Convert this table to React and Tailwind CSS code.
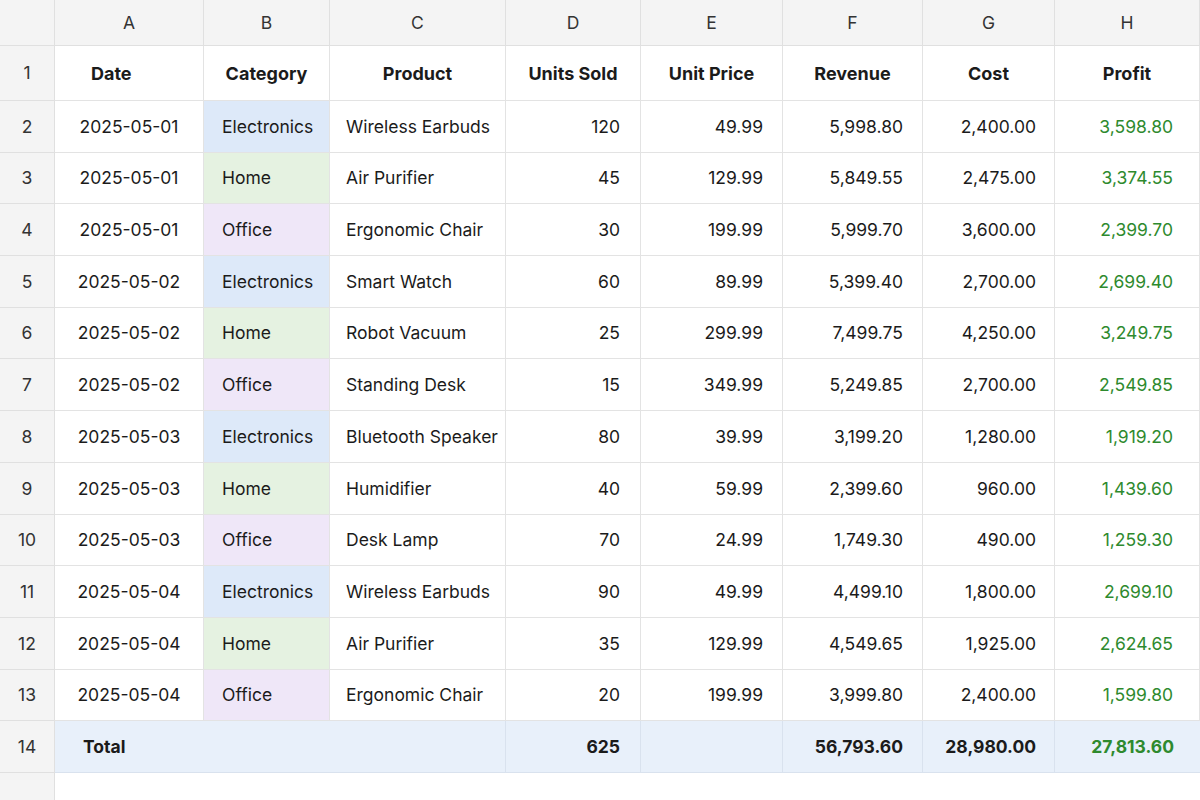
import React from "react";

const rows = [
  ["2025-05-01", "Electronics", "Wireless Earbuds", "120", "49.99", "5,998.80", "2,400.00", "3,598.80"],
  ["2025-05-01", "Home", "Air Purifier", "45", "129.99", "5,849.55", "2,475.00", "3,374.55"],
  ["2025-05-01", "Office", "Ergonomic Chair", "30", "199.99", "5,999.70", "3,600.00", "2,399.70"],
  ["2025-05-02", "Electronics", "Smart Watch", "60", "89.99", "5,399.40", "2,700.00", "2,699.40"],
  ["2025-05-02", "Home", "Robot Vacuum", "25", "299.99", "7,499.75", "4,250.00", "3,249.75"],
  ["2025-05-02", "Office", "Standing Desk", "15", "349.99", "5,249.85", "2,700.00", "2,549.85"],
  ["2025-05-03", "Electronics", "Bluetooth Speaker", "80", "39.99", "3,199.20", "1,280.00", "1,919.20"],
  ["2025-05-03", "Home", "Humidifier", "40", "59.99", "2,399.60", "960.00", "1,439.60"],
  ["2025-05-03", "Office", "Desk Lamp", "70", "24.99", "1,749.30", "490.00", "1,259.30"],
  ["2025-05-04", "Electronics", "Wireless Earbuds", "90", "49.99", "4,499.10", "1,800.00", "2,699.10"],
  ["2025-05-04", "Home", "Air Purifier", "35", "129.99", "4,549.65", "1,925.00", "2,624.65"],
  ["2025-05-04", "Office", "Ergonomic Chair", "20", "199.99", "3,999.80", "2,400.00", "1,599.80"],
];

const catBg = {
  Electronics: "bg-[#dde9f9]",
  Home: "bg-[#e5f2e1]",
  Office: "bg-[#efe7f8]",
};

const cell = "border-r border-b border-[#e3e3e3] flex items-center pt-[1px] h-[51.7px]";
const rowNum = "border-r border-b border-[#e0e0e0] bg-[#f4f4f4] flex items-center justify-center text-[#333] pt-[1px]";
const hdr = "border-r border-b border-[#e3e3e3] flex items-center font-bold text-[18px] h-[55px] pt-[1px]";
const tot = "h-[51.7px] bg-[#e8f0fa] border-b border-[#d9e2ee] flex items-center pt-[1px] font-bold";

export default function App() {
  return (
    <div
      className="w-[1200px] h-[800px] overflow-hidden bg-white text-[17.5px] text-[#1b1b1b]"
      style={{ fontFamily: "Inter, 'Noto Sans', sans-serif" }}
    >
      <div className="grid grid-cols-[55px_149px_126px_176px_135px_142px_140px_132px_145px]">
        {/* column letters */}
        <div className={`${rowNum} h-[46px]`}></div>
        {["A", "B", "C", "D", "E", "F", "G", "H"].map((l) => (
          <div key={l} className={`${rowNum} h-[46px] justify-center`}>
            {l}
          </div>
        ))}

        {/* header row */}
        <div className={`${rowNum} h-[55px]`}>1</div>
        <div className={`${hdr} pl-[36px]`}>Date</div>
        <div className={`${hdr} justify-center`}>Category</div>
        <div className={`${hdr} justify-center`}>Product</div>
        <div className={`${hdr} justify-center`}>Units Sold</div>
        <div className={`${hdr} justify-center`}>Unit Price</div>
        <div className={`${hdr} justify-center`}>Revenue</div>
        <div className={`${hdr} justify-center`}>Cost</div>
        <div className={`${hdr} justify-center`}>Profit</div>

        {rows.map((r, i) => (
          <React.Fragment key={i}>
            <div className={`${rowNum} h-[51.7px]`}>{i + 2}</div>
            <div className={`${cell} justify-center`}>{r[0]}</div>
            <div className={`${cell} pl-[18px] ${catBg[r[1]]}`}>{r[1]}</div>
            <div className={`${cell} pl-[16px] whitespace-nowrap`}>{r[2]}</div>
            <div className={`${cell} justify-end pr-[20px]`}>{r[3]}</div>
            <div className={`${cell} justify-end pr-[19px]`}>{r[4]}</div>
            <div className={`${cell} justify-end pr-[19px]`}>{r[5]}</div>
            <div className={`${cell} justify-end pr-[18px]`}>{r[6]}</div>
            <div className={`${cell} justify-end pr-[26px] text-[#2e8a2e]`}>{r[7]}</div>
          </React.Fragment>
        ))}

        {/* total row */}
        <div className={`${rowNum} h-[51.7px]`}>14</div>
        <div className={`${tot} col-span-3 border-r pl-[28px]`}>Total</div>
        <div className={`${tot} border-r justify-end pr-[20px]`}>625</div>
        <div className={`${tot} border-r`}></div>
        <div className={`${tot} border-r justify-end pr-[19px]`}>56,793.60</div>
        <div className={`${tot} border-r justify-end pr-[18px]`}>28,980.00</div>
        <div className={`${tot} justify-end pr-[26px] text-[#2e8a2e]`}>27,813.60</div>

        {/* empty row below */}
        <div className="h-[60px] bg-[#f4f4f4] border-r border-[#e0e0e0]"></div>
        <div className="col-span-8 h-[60px] bg-white"></div>
      </div>
    </div>
  );
}
